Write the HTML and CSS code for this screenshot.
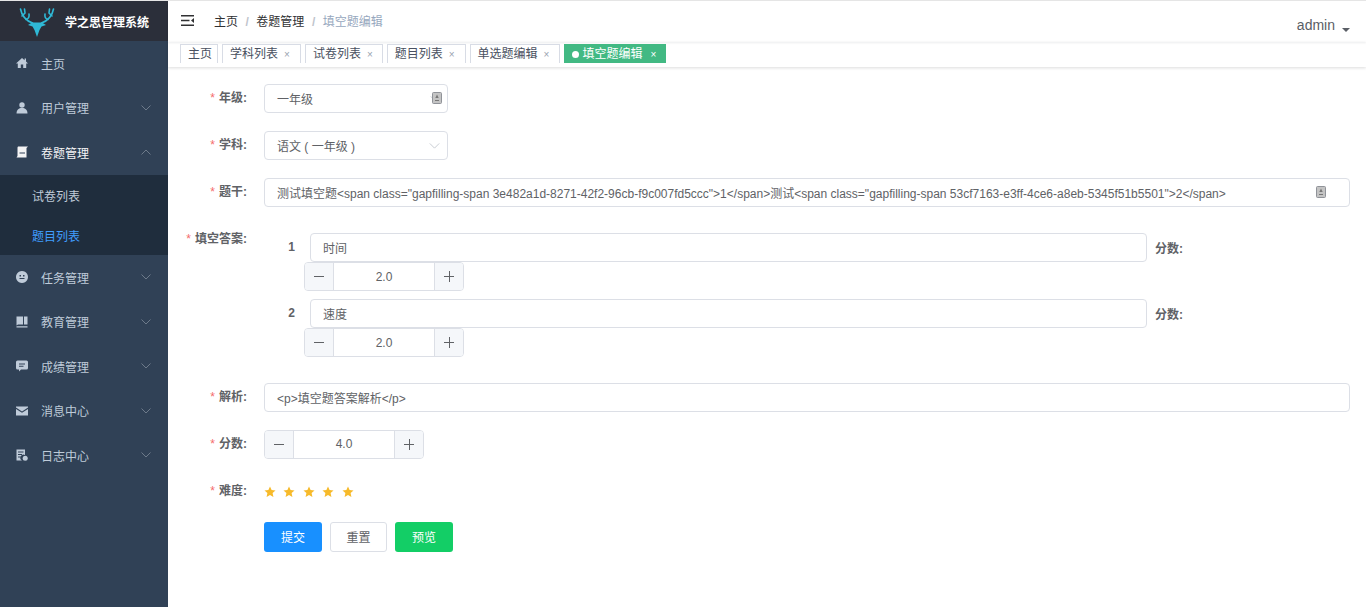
FILE: index.html
```html
<!DOCTYPE html>
<html lang="zh">
<head>
<meta charset="utf-8">
<title>填空题编辑</title>
<link rel="stylesheet" href="styles.css">
</head>
<body>
<div class="app">
  <aside class="sidebar">
    <div class="logo">
      <svg class="logo-img" viewBox="0 0 36 29"><g class="antler"><path d="M13.5 15 C8 13 3 9 1.5 1"/><path d="M3 8 L6 5 L5.5 1"/><path d="M7 11.5 C9 11 10.5 9 10 6"/><path d="M22.5 15 C28 13 33 9 34.5 1"/><path d="M33 8 L30 5 L30.5 1"/><path d="M29 11.5 C27 11 25.5 9 26 6"/></g><path class="deer-head" d="M18 29 L15.5 22 L13.5 18.5 L9 17 L13 14.5 L23 14.5 L27 17 L22.5 18.5 L20.5 22 Z"/></svg>
      <span class="logo-title">学之思管理系统</span>
    </div>
    <nav class="menu">
      <div class="menu-item"><svg class="mi" viewBox="0 0 12 12"><path d="M6 1 L0 6.5 L1.8 6.5 L1.8 11 L4.8 11 L4.8 7.5 L7.2 7.5 L7.2 11 L10.2 11 L10.2 6.5 L12 6.5 L10 4.6 L10 1.5 L8.6 1.5 L8.6 3.3 Z"/></svg><span>主页</span></div>
      <div class="menu-item"><svg class="mi" viewBox="0 0 12 12"><circle cx="6" cy="3" r="2.7"/><path d="M0.5 11.5 C0.5 7.5 3 6.5 4.5 6 L7.5 6 C9 6.5 11.5 7.5 11.5 11.5 Z"/></svg><span>用户管理</span><svg class="chev" viewBox="0 0 10 6"><path d="M0.5 0.5 L5 5 L9.5 0.5"/></svg></div>
      <div class="menu-item open"><svg class="mi" viewBox="0 0 12 12"><path fill-rule="evenodd" d="M2 0.5 L12 0.5 L10.5 2 L10.5 11.5 L0.5 11.5 L1.5 10 L1.5 1.5 Z M3.5 6.5 L3.5 7.5 L9 7.5 L9 6.5 Z"/></svg><span>卷题管理</span><svg class="chev" viewBox="0 0 10 6"><path d="M0.5 5.5 L5 1 L9.5 5.5"/></svg></div>
      <div class="submenu">
        <div class="sub-item">试卷列表</div>
        <div class="sub-item active">题目列表</div>
      </div>
      <div class="menu-item"><svg class="mi" viewBox="0 0 12 12"><path fill-rule="evenodd" d="M6 0 A6 6 0 1 1 5.99 0 Z M3.5 4 L3.5 5.5 L5 5.5 L5 4 Z M7 4 L7 5.5 L8.5 5.5 L8.5 4 Z M3.5 7 L3.5 8 L8.5 8 L8.5 7 Z"/></svg><span>任务管理</span><svg class="chev" viewBox="0 0 10 6"><path d="M0.5 0.5 L5 5 L9.5 0.5"/></svg></div>
      <div class="menu-item"><svg class="mi" viewBox="0 0 12 12"><path d="M0.5 0.5 L11.5 0.5 L11.5 8.5 L8 8.5 L8 0.5 L7 0.5 L7 8.5 L2 8.5 L0.5 9.5 Z M0.5 10.3 L11.5 10.3 L11.5 11.5 L0.5 11.5 Z"/></svg><span>教育管理</span><svg class="chev" viewBox="0 0 10 6"><path d="M0.5 0.5 L5 5 L9.5 0.5"/></svg></div>
      <div class="menu-item"><svg class="mi" viewBox="0 0 12 12"><path fill-rule="evenodd" d="M1.5 0.5 L10.5 0.5 Q12 0.5 12 2 L12 8 Q12 9.5 10.5 9.5 L5 9.5 L3 11.5 L3 9.5 L1.5 9.5 Q0 9.5 0 8 L0 2 Q0 0.5 1.5 0.5 Z M3 3.5 L3 4.5 L9 4.5 L9 3.5 Z M3 5.7 L3 6.7 L7.5 6.7 L7.5 5.7 Z"/></svg><span>成绩管理</span><svg class="chev" viewBox="0 0 10 6"><path d="M0.5 0.5 L5 5 L9.5 0.5"/></svg></div>
      <div class="menu-item"><svg class="mi" viewBox="0 0 12 12"><path d="M0 1.5 L12 1.5 L12 2.6 L6 6.4 L0 2.6 Z M0 4 L6 7.8 L12 4 L12 10.5 L0 10.5 Z"/></svg><span>消息中心</span><svg class="chev" viewBox="0 0 10 6"><path d="M0.5 0.5 L5 5 L9.5 0.5"/></svg></div>
      <div class="menu-item"><svg class="mi" viewBox="0 0 12 12"><path fill-rule="evenodd" d="M0.5 0.5 L9 0.5 L9 6 A3 3 0 0 0 6 11.5 L0.5 11.5 Z M2 2.5 L2 3.5 L7.5 3.5 L7.5 2.5 Z M2 5 L2 6 L6 6 L6 5 Z M2 7.5 L2 8.5 L4.5 8.5 L4.5 7.5 Z"/><circle cx="9.2" cy="9.2" r="2.5"/></svg><span>日志中心</span><svg class="chev" viewBox="0 0 10 6"><path d="M0.5 0.5 L5 5 L9.5 0.5"/></svg></div>
    </nav>
  </aside>
  <main class="main">
    <header class="navbar">
      <svg class="hamburger" viewBox="0 0 13 11"><path d="M0 0 H13 V1.5 H0 Z M0 9.5 H13 V11 H0 Z M0 4.7 H8.5 V6.2 H0 Z M13 3 V8 L10 5.5 Z"/></svg>
      <div class="crumbs"><span>主页</span><i>/</i><span>卷题管理</span><i>/</i><span class="crumb-last">填空题编辑</span></div>
      <div class="user"><span>admin</span><b class="caret"></b></div>
    </header>
    <div class="tags">
      <span class="tag">主页</span>
      <span class="tag">学科列表<em>×</em></span>
      <span class="tag">试卷列表<em>×</em></span>
      <span class="tag">题目列表<em>×</em></span>
      <span class="tag">单选题编辑<em>×</em></span>
      <span class="tag current"><u></u>填空题编辑<em>×</em></span>
    </div>
    <form class="form">
      <div class="row">
        <label class="lbl">年级:</label>
        <div class="input w184"><span>一年级</span>
          <svg class="tick" viewBox="0 0 12 7"><path d="M0.5 0.5 L6 6 L11.5 0.5"/></svg>
          <svg class="edit" viewBox="0 0 10 12"><rect x="0.5" y="0.5" width="9" height="11" rx="1"/><path class="edit-in" d="M5 2.5 L3.3 6 H6.7 Z M3 8 H7 V9 H3 Z"/></svg>
        </div>
      </div>
      <div class="row">
        <label class="lbl">学科:</label>
        <div class="input w184"><span>语文 ( 一年级 )</span><svg class="sel" viewBox="0 0 12 7"><path d="M0.5 0.5 L6 6 L11.5 0.5"/></svg></div>
      </div>
      <div class="row gap26">
        <label class="lbl">题干:</label>
        <div class="input grow"><span>测试填空题&lt;span class="gapfilling-span 3e482a1d-8271-42f2-96cb-f9c007fd5ccc"&gt;1&lt;/span&gt;测试&lt;span class="gapfilling-span 53cf7163-e3ff-4ce6-a8eb-5345f51b5501"&gt;2&lt;/span&gt;</span>
          <svg class="edit far" viewBox="0 0 10 12"><rect x="0.5" y="0.5" width="9" height="11" rx="1"/><path class="edit-in" d="M5 2.5 L3.3 6 H6.7 Z M3 8 H7 V9 H3 Z"/></svg>
        </div>
      </div>
      <div class="row gap26">
        <label class="lbl lbl-up">填空答案:</label>
        <div class="answers">
          <div class="answer">
            <div class="answer-line"><span class="ans-no">1</span><div class="input ans-input"><span>时间</span></div><span class="ans-score">分数:</span></div>
            <div class="stepper ans-step"><span class="step-btn minus"></span><span class="step-val">2.0</span><span class="step-btn plus"></span></div>
          </div>
          <div class="answer">
            <div class="answer-line"><span class="ans-no">2</span><div class="input ans-input"><span>速度</span></div><span class="ans-score">分数:</span></div>
            <div class="stepper ans-step"><span class="step-btn minus"></span><span class="step-val">2.0</span><span class="step-btn plus"></span></div>
          </div>
        </div>
      </div>
      <div class="row">
        <label class="lbl">解析:</label>
        <div class="input grow"><span>&lt;p&gt;填空题答案解析&lt;/p&gt;</span></div>
      </div>
      <div class="row">
        <label class="lbl">分数:</label>
        <div class="stepper"><span class="step-btn minus"></span><span class="step-val tight">4.0</span><span class="step-btn plus"></span></div>
      </div>
      <div class="row stars-row">
        <label class="lbl">难度:</label>
        <div class="stars">
          <svg viewBox="0 0 12 12"><path d="M6 0.5 L7.6 4.1 L11.5 4.5 L8.6 7.1 L9.4 11 L6 9 L2.6 11 L3.4 7.1 L0.5 4.5 L4.4 4.1 Z"/></svg>
          <svg viewBox="0 0 12 12"><path d="M6 0.5 L7.6 4.1 L11.5 4.5 L8.6 7.1 L9.4 11 L6 9 L2.6 11 L3.4 7.1 L0.5 4.5 L4.4 4.1 Z"/></svg>
          <svg viewBox="0 0 12 12"><path d="M6 0.5 L7.6 4.1 L11.5 4.5 L8.6 7.1 L9.4 11 L6 9 L2.6 11 L3.4 7.1 L0.5 4.5 L4.4 4.1 Z"/></svg>
          <svg viewBox="0 0 12 12"><path d="M6 0.5 L7.6 4.1 L11.5 4.5 L8.6 7.1 L9.4 11 L6 9 L2.6 11 L3.4 7.1 L0.5 4.5 L4.4 4.1 Z"/></svg>
          <svg viewBox="0 0 12 12"><path d="M6 0.5 L7.6 4.1 L11.5 4.5 L8.6 7.1 L9.4 11 L6 9 L2.6 11 L3.4 7.1 L0.5 4.5 L4.4 4.1 Z"/></svg>
        </div>
      </div>
      <div class="actions">
        <button type="button" class="btn primary">提交</button>
        <button type="button" class="btn plain">重置</button>
        <button type="button" class="btn success">预览</button>
      </div>
    </form>
  </main>
</div>
</body>
</html>
```
FILE: styles.css
```css
* { box-sizing: border-box; }
html, body { margin: 0; height: 100%; overflow: hidden; }
body {
  font-family: "Liberation Sans", "Noto Sans CJK SC", sans-serif;
  font-size: 12px;
  color: #606266;
  background: #fff;
}
.app { display: flex; height: 607px; border-top: 1px solid #e6e6e6; }

/* sidebar */
.sidebar { width: 168px; flex: none; background: #304156; color: #bfcbd9; }
.logo { height: 40px; background: #2b2f3a; display: flex; align-items: center; padding-left: 19px; }
.logo-img { width: 36px; height: 29px; flex: none; margin-top: 2px; }
.antler { fill: none; stroke: #2fb9d6; stroke-width: 1.6; stroke-linecap: round; }
.deer-head { fill: #2fb9d6; }
.logo-title { margin-left: 10px; color: #fff; font-weight: 700; font-size: 12px; }
.menu-item { height: 44.6px; display: flex; align-items: center; padding-left: 16px; padding-right: 16px; }
.mi { width: 12px; height: 12px; fill: #bfcbd9; flex: none; margin-right: 13px; }
.chev { width: 10px; height: 6px; margin-left: auto; fill: none; stroke: #6d7a8a; stroke-width: 1; flex: none; margin-right: 1px; }
.menu-item.open { color: #f4f4f5; }
.menu-item.open .mi { fill: #f4f4f5; }
.submenu { background: #1f2d3d; }
.sub-item { height: 40px; line-height: 40px; padding-left: 32px; padding-top: 2px; }
.sub-item.active { color: #409eff; }

/* main column */
.main { flex: 1; min-width: 0; display: flex; flex-direction: column; }
.navbar { height: 41px; flex: none; display: flex; align-items: center; padding-left: 13px; position: relative; box-shadow: 0 1px 2px rgba(0, 21, 41, .08); }
.hamburger { width: 13px; height: 11px; fill: #303133; flex: none; margin-top: -3px; }
.crumbs { margin-left: 20px; margin-top: -2px; color: #303133; white-space: nowrap; }
.crumbs i { font-style: normal; color: #c0c4cc; margin: 0 7.5px; font-weight: 700; }
.crumb-last { color: #97a8be; }
.user { margin-left: auto; margin-right: 16px; margin-top: 7px; display: flex; align-items: center; font-size: 14px; color: #5a5e66; }
.caret { width: 0; height: 0; border: 4px solid transparent; border-top: 4px solid #5a5e66; border-bottom: 0; margin-left: 7px; margin-top: 10px; }

.tags { height: 25px; flex: none; display: flex; gap: 4px; padding: 2px 0 0 12px; overflow: hidden; box-shadow: 0 1px 3px rgba(0, 0, 0, .14); position: relative; }
.tag { height: 19px; line-height: 19px; border: 1px solid #d8dce5; border-bottom: 0; padding: 0 8px 0 7px; color: #495060; display: flex; white-space: nowrap; background: #fff; }
.tag em { font-style: normal; font-size: 10px; color: #9aa3b0; margin-left: 6px; }
.tag:nth-child(1) { padding-right: 5px; }
.tag:nth-child(2) { padding-right: 10px; }
.tag:nth-child(3) { padding-right: 9px; }
.tag:nth-child(4) { padding-right: 10px; }
.tag:nth-child(5) { padding-right: 10px; }
.tag.current { background: #42b983; border-color: #42b983; color: #fff; align-items: center; padding-right: 9px; }
.tag.current em { color: #fff; margin-left: 8px; }
.tag.current u { width: 7px; height: 7px; background: #fff; border-radius: 50%; margin-right: 3px; flex: none; }

/* form */
.form { padding: 17px 16px 0 0; }
.row { display: flex; align-items: flex-start; gap: 17px; margin-bottom: 18px; }
.row.gap26 { margin-bottom: 26px; }
.lbl { width: 79px; flex: none; text-align: right; line-height: 28px; color: #606266; font-weight: 700; white-space: nowrap; }
.lbl::before { content: "*"; color: #f56c6c; margin-right: 4px; font-weight: 400; }
.lbl-up { margin-top: -8px; }
.input { height: 29px; border: 1px solid #dcdfe6; border-radius: 4px; display: flex; align-items: center; padding: 0 12px; position: relative; background: #fff; white-space: nowrap; min-width: 0; }
.w184 { width: 184px; }
.grow { flex: 1; }
.edit { width: 10px; height: 12px; fill: #c4c4c4; stroke: #909399; stroke-width: 1; position: absolute; right: 5px; top: 7px; }
.edit.far { right: 23px; }
.edit-in { fill: #777; stroke: none; }
.tick { width: 11px; height: 6px; fill: none; stroke: #c0c4cc; position: absolute; right: 6px; top: 11px; }
.sel { width: 11px; height: 6px; fill: none; stroke: #c0c4cc; position: absolute; right: 7px; top: 11px; }

/* answers */
.answers { flex: 1; min-width: 0; display: flex; flex-direction: column; gap: 8px; }
.answer-line { display: flex; align-items: center; }
.ans-no { width: 31px; text-align: right; font-weight: 700; color: #606266; flex: none; margin-right: 15px; margin-top: -1px; }
.ans-input { width: 837px; flex: none; }
.ans-score { margin-left: 8px; font-weight: 700; white-space: nowrap; }
.ans-step { margin-left: 40px; }

.stepper { width: 160px; height: 29px; border: 1px solid #dcdfe6; border-radius: 4px; display: flex; overflow: hidden; background: #fff; flex: none; }
.step-btn { width: 29px; flex: none; background: #f5f7fa; position: relative; }
.step-btn.minus { border-right: 1px solid #dcdfe6; }
.step-btn.plus { border-left: 1px solid #dcdfe6; }
.step-btn::before { content: ""; position: absolute; left: 9px; top: 13px; width: 10px; height: 1px; background: #606266; }
.step-btn.plus::after { content: ""; position: absolute; left: 14px; top: 8px; width: 1px; height: 11px; background: #606266; }
.step-val { flex: 1; text-align: center; line-height: 28px; }
.step-val.tight { line-height: 26px; }

.stars-row { margin-bottom: 17px; margin-top: 18px; }
.stars { display: flex; gap: 7.4px; padding-top: 9px; }
.stars svg { width: 12px; height: 12px; fill: #f7ba2a; flex: none; }

.actions { display: flex; gap: 8px; padding-left: 96px; }
.btn { height: 30px; border-radius: 3px; border: 1px solid transparent; font: inherit; width: 58px; padding: 0 0 2px; }
.btn.primary { background: #1890ff; color: #fff; }
.btn.plain { background: #fff; border-color: #dcdfe6; color: #606266; width: 57px; }
.btn.success { background: #13ce66; color: #fff; }
```
